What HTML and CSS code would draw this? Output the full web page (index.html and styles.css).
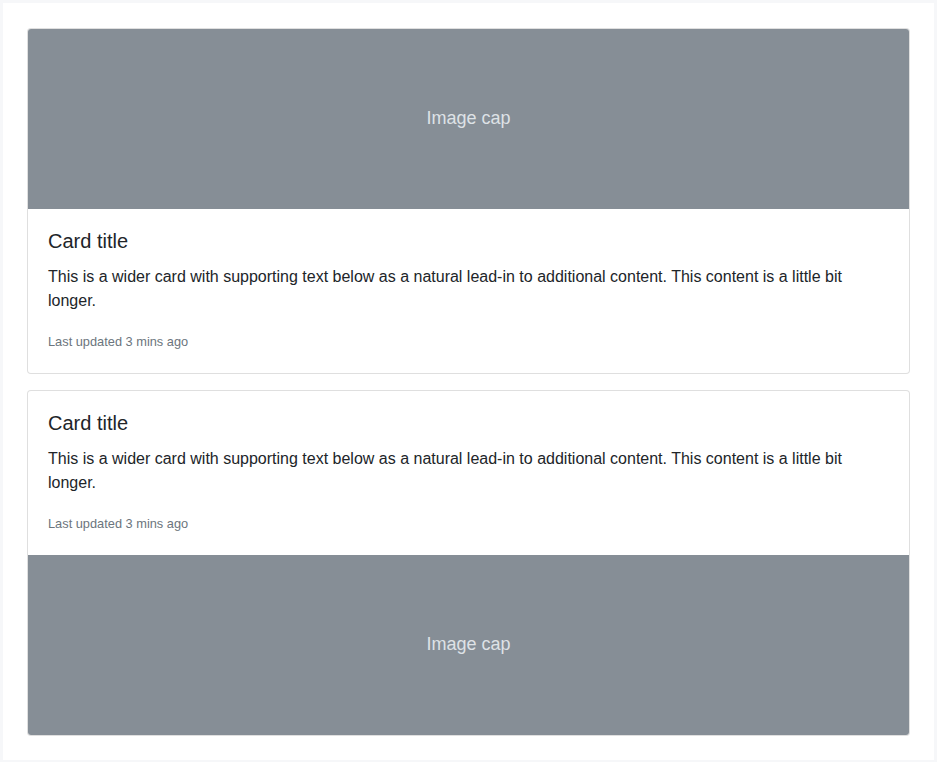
FILE: index.html
```html
<!DOCTYPE html>
<html lang="en">
<head>
<meta charset="utf-8">
<title>Cards</title>
<link rel="stylesheet" href="styles.css">
</head>
<body>
<div class="frame">
  <div class="card">
    <svg class="card-img" width="100%" height="180" xmlns="http://www.w3.org/2000/svg" preserveAspectRatio="xMidYMid slice" role="img" aria-label="Image cap">
      <rect width="100%" height="100%" fill="#868e96"></rect>
      <text x="50%" y="50%" fill="#dee2e6" dy=".3em" text-anchor="middle">Image cap</text>
    </svg>
    <div class="card-body">
      <h5 class="card-title">Card title</h5>
      <p class="card-text">This is a wider card with supporting text below as a natural lead-in to additional content. This content is a little bit longer.</p>
      <p class="card-text last"><small class="muted">Last updated 3 mins ago</small></p>
    </div>
  </div>
  <div class="card">
    <div class="card-body">
      <h5 class="card-title">Card title</h5>
      <p class="card-text">This is a wider card with supporting text below as a natural lead-in to additional content. This content is a little bit longer.</p>
      <p class="card-text last"><small class="muted">Last updated 3 mins ago</small></p>
    </div>
    <svg class="card-img bottom" width="100%" height="180" xmlns="http://www.w3.org/2000/svg" preserveAspectRatio="xMidYMid slice" role="img" aria-label="Image cap">
      <rect width="100%" height="100%" fill="#868e96"></rect>
      <text x="50%" y="50%" fill="#dee2e6" dy=".3em" text-anchor="middle">Image cap</text>
    </svg>
  </div>
</div>
</body>
</html>
```

FILE: styles.css
```css
html, body {
  margin: 0;
  padding: 0;
}
body {
  background: #f6f7f9;
  padding: 3px;
  font-family: "Liberation Sans", Arial, sans-serif;
  font-size: 16px;
  line-height: 1.5;
  color: #212529;
  box-sizing: border-box;
  height: 762px;
}
.frame {
  background: #fff;
  padding: 25px 24px 24px 24px;
  display: flex;
  flex-direction: column;
  gap: 16px;
  height: 757px;
  box-sizing: border-box;
}
.card {
  border: 1px solid rgba(0, 0, 0, 0.125);
  border-radius: 4px;
  overflow: hidden;
  display: flex;
  flex-direction: column;
  background: #fff;
}
.card-img {
  display: block;
  font-size: 18px;
  font-family: "Liberation Sans", Arial, sans-serif;
}
.card-body {
  padding: 20px;
}
.card-title {
  margin: 0 0 12px 0;
  font-size: 20px;
  font-weight: 500;
  line-height: 1.2;
}
.card-text {
  margin: 0 0 16px 0;
}
.card-text.last {
  margin-bottom: 0;
}
.muted {
  font-size: 80%;
  color: #6c757d;
}
```
